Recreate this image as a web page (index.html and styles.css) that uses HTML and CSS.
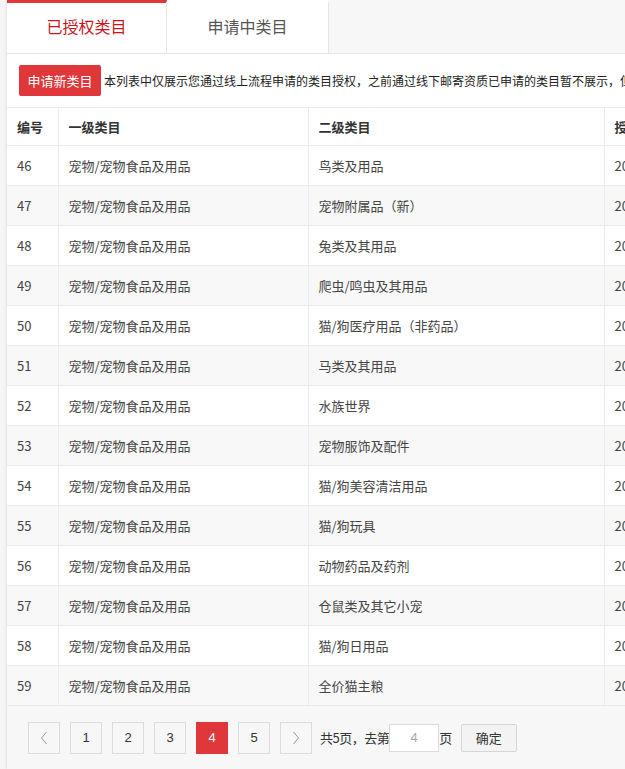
FILE: index.html
```html
<!DOCTYPE html>
<html lang="zh">
<head>
<meta charset="utf-8">
<link rel="stylesheet" href="styles.css">
</head>
<body>
<div class="wrap">
  <div class="tabs">
    <div class="tab active">已授权类目</div>
    <div class="tab">申请中类目</div>
    <div class="tab-rest"></div>
  </div>
  <div class="panel">
    <div class="toolbar">
      <button class="btn-apply">申请新类目</button>
      <span class="notice">本列表中仅展示您通过线上流程申请的类目授权，之前通过线下邮寄资质已申请的类目暂不展示，但不影响您的正常经营</span>
    </div>
    <table class="grid">
      <colgroup>
        <col class="c1"><col class="c2"><col class="c3"><col class="c4">
      </colgroup>
      <thead>
        <tr><th>编号</th><th>一级类目</th><th>二级类目</th><th>授权时间</th></tr>
      </thead>
      <tbody>
        <tr><td>46</td><td>宠物/宠物食品及用品</td><td>鸟类及用品</td><td>2018-05-21</td></tr>
        <tr><td>47</td><td>宠物/宠物食品及用品</td><td>宠物附属品（新）</td><td>2018-05-21</td></tr>
        <tr><td>48</td><td>宠物/宠物食品及用品</td><td>兔类及其用品</td><td>2018-05-21</td></tr>
        <tr><td>49</td><td>宠物/宠物食品及用品</td><td>爬虫/鸣虫及其用品</td><td>2018-05-21</td></tr>
        <tr><td>50</td><td>宠物/宠物食品及用品</td><td>猫/狗医疗用品（非药品）</td><td>2018-05-21</td></tr>
        <tr><td>51</td><td>宠物/宠物食品及用品</td><td>马类及其用品</td><td>2018-05-21</td></tr>
        <tr><td>52</td><td>宠物/宠物食品及用品</td><td>水族世界</td><td>2018-05-21</td></tr>
        <tr><td>53</td><td>宠物/宠物食品及用品</td><td>宠物服饰及配件</td><td>2018-05-21</td></tr>
        <tr><td>54</td><td>宠物/宠物食品及用品</td><td>猫/狗美容清洁用品</td><td>2018-05-21</td></tr>
        <tr><td>55</td><td>宠物/宠物食品及用品</td><td>猫/狗玩具</td><td>2018-05-21</td></tr>
        <tr><td>56</td><td>宠物/宠物食品及用品</td><td>动物药品及药剂</td><td>2018-05-21</td></tr>
        <tr><td>57</td><td>宠物/宠物食品及用品</td><td>仓鼠类及其它小宠</td><td>2018-05-21</td></tr>
        <tr><td>58</td><td>宠物/宠物食品及用品</td><td>猫/狗日用品</td><td>2018-05-21</td></tr>
        <tr><td>59</td><td>宠物/宠物食品及用品</td><td>全价猫主粮</td><td>2018-05-21</td></tr>
      </tbody>
    </table>
    <div class="pager">
      <span class="pg arrow"><svg width="10" height="14" viewBox="0 0 10 14"><polyline points="7.5,1 2.5,7 7.5,13" fill="none" stroke="#999" stroke-width="1"/></svg></span>
      <span class="pg">1</span>
      <span class="pg">2</span>
      <span class="pg">3</span>
      <span class="pg current">4</span>
      <span class="pg">5</span>
      <span class="pg arrow"><svg width="10" height="14" viewBox="0 0 10 14"><polyline points="2.5,1 7.5,7 2.5,13" fill="none" stroke="#999" stroke-width="1"/></svg></span>
      <span class="pg-text">共5页，去第</span>
      <span class="pg-input">4</span>
      <span class="pg-text">页</span>
      <span class="pg-ok">确定</span>
    </div>
  </div>
</div>
</body>
</html>
```
FILE: styles.css
```css
html, body {
  margin: 0;
  padding: 0;
}
body {
  background: #f5f5f5;
  font-family: "Noto Sans CJK SC", "Noto Sans", sans-serif;
  color: #333;
  overflow: hidden;
  width: 625px;
  height: 769px;
}
.wrap {
  margin-left: 7px;
  width: 820px;
  box-shadow: -1px 0 2px rgba(0,0,0,0.08);
}
.tabs {
  display: flex;
  height: 53px;
  border-bottom: 1px solid #e6e6e6;
  background: #f7f7f7;
}
.tab {
  width: 160px;
  box-sizing: border-box;
  background: #fff;
  border-right: 1px solid #e6e6e6;
  border-top: 3px solid #fff;
  display: flex;
  align-items: center;
  justify-content: center;
  font-size: 16px;
  color: #555;
  padding-bottom: 4px;
}
.tab.active {
  border-top-color: #e0363a;
  color: #c8161e;
  width: 160px;
}
.tab:nth-child(2) {
  width: 162px;
}
.tab-rest {
  flex: 1;
}
.panel {
  background: #fff;
}
.toolbar {
  display: flex;
  align-items: center;
  height: 53px;
  padding-left: 12px;
  white-space: nowrap;
}
.btn-apply {
  width: 82px;
  height: 31px;
  border: none;
  border-radius: 2px;
  background: #e0383a;
  color: #fff;
  font-family: inherit;
  font-size: 13px;
  padding: 0;
  margin-right: 3px;
}
.notice {
  font-size: 12px;
  color: #222;
}
.grid {
  border-collapse: collapse;
  width: 820px;
  table-layout: fixed;
  font-size: 13px;
}
.c1 { width: 51px; }
.c2 { width: 250px; }
.c3 { width: 296px; }
.c4 { width: 223px; }
.grid th, .grid td {
  border: 1px solid #ebebeb;
  text-align: left;
  padding: 0 10px;
  white-space: nowrap;
  overflow: hidden;
}
.grid th:first-child, .grid td:first-child {
  border-left: none;
}
.grid th {
  height: 37px;
  font-weight: bold;
  color: #333;
}
.grid td {
  height: 39px;
  color: #444;
}
.grid tbody tr:nth-child(even) td {
  background: #f8f8f8;
}
.pager {
  background: #f7f7f7;
  height: 63px;
  display: flex;
  align-items: center;
  padding-left: 21px;
  font-size: 13px;
  box-sizing: border-box;
}
.pg {
  width: 32px;
  height: 32px;
  box-sizing: border-box;
  border: 1px solid #dcdcdc;
  background: #f7f7f7;
  display: flex;
  align-items: center;
  justify-content: center;
  margin-right: 10px;
  color: #333;
  font-family: "Liberation Sans", sans-serif;
  font-size: 13px;
}
.pg.current {
  background: #e0383a;
  border-color: #e0383a;
  color: #fff;
}
.pg-text {
  color: #333;
  margin-left: -2px;
  letter-spacing: -0.5px;
}
.pg-input {
  width: 50px;
  height: 28px;
  box-sizing: border-box;
  border: 1px solid #dcdcdc;
  background: #fff;
  color: #aaa;
  display: flex;
  align-items: center;
  justify-content: center;
  margin: 0 2px 0 0;
  font-family: "Liberation Sans", sans-serif;
}
.pg-ok {
  width: 56px;
  height: 28px;
  box-sizing: border-box;
  border: 1px solid #d6d6d6;
  border-radius: 2px;
  background: #f3f3f3;
  display: flex;
  align-items: center;
  justify-content: center;
  margin-left: 9px;
  color: #333;
}
```
